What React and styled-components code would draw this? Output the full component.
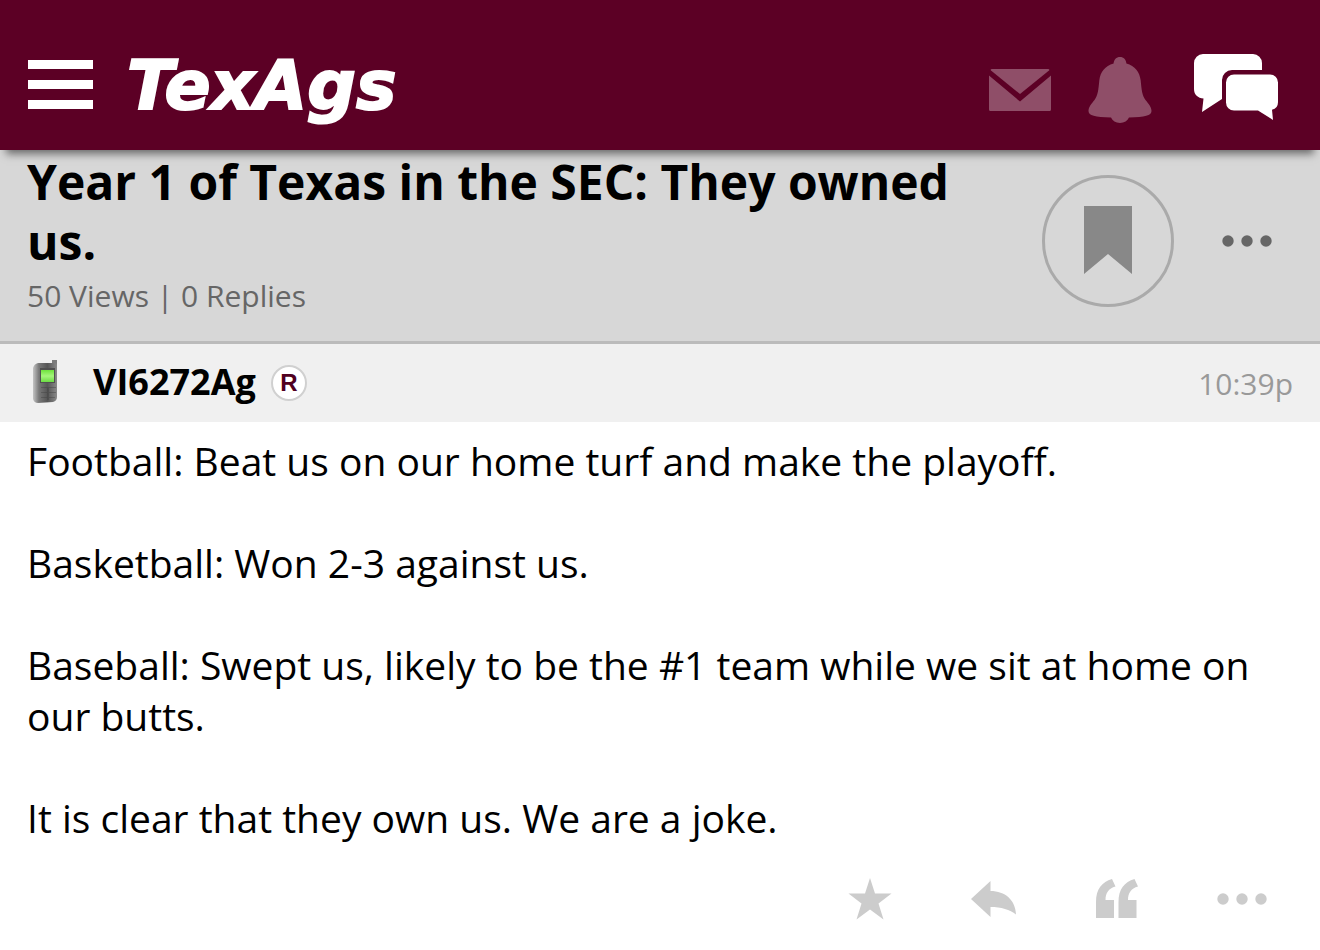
import React from 'react'
import styled, { createGlobalStyle } from 'styled-components';

const GlobalStyle = createGlobalStyle`
    *{
        box-sizing: border-box;
    }
    body{
        margin: 0;
        background: #ffffff;
        color: #000000;
        font-family: 'Open Sans', 'Noto Sans', sans-serif;
    }
`;

const EnvelopeIcon = () => (
  <svg width='64' height='44' viewBox='0 0 64 44' fill='currentColor' aria-hidden='true'>
    <path d='M4 1h56q2 0 1 1.500L32 26 3 2.500Q2 1 4 1z' />
    <path d='M1 7.500L32 33.500 63 7.500V41.500a1.500 1.500 0 0 1-1.500 1.500h-59A1.500 1.500 0 0 1 1 41.500z' />
  </svg>
)

const BellIcon = () => (
  <svg width='64' height='68' viewBox='0 0 64 68' fill='currentColor' aria-hidden='true'>
    <path d='M32 1c3.600 0 6.200 2.600 6.400 6.600 8.600 2.600 13.300 8.400 14.300 17 .8 9.200 1.600 15.400 4.800 19.400 2.900 3.600 6 7 6 11 0 4.600-6.500 6-22.500 6.600C39.500 65 36.300 67 32 67s-7.500-2-9-5.400C7 61 .5 59.600.5 55c0-4 3.100-7.400 6-11 3.200-4 4-10.200 4.800-19.400 1-8.600 5.700-14.400 14.300-17C25.800 3.600 28.400 1 32 1z' />
  </svg>
)

const ChatIcon = () => (
  <svg width='84' height='68' viewBox='0 0 84 68' fill='currentColor' aria-hidden='true'>
    <path d='M9 1h50a9 9 0 0 1 9 9v7H38a10 10 0 0 0-10 10v19L8 59l1.500-13.500C4 45 0 42 0 36V10a9 9 0 0 1 9-9z' />
    <path d='M40 21.500h36a8 8 0 0 1 8 8V49a8 8 0 0 1-6 7.800L79 67 64 57.500H40a8 8 0 0 1-8-8v-20a8 8 0 0 1 8-8z' />
  </svg>
)

const BookmarkIcon = () => (
  <svg width='48' height='68' viewBox='0 0 48 68' fill='#888888' aria-hidden='true'>
    <path d='M0 0h48v68L24 48 0 68z' />
  </svg>
)

const DotsIcon = () => (
  <svg width='50' height='12' viewBox='0 0 50 12' fill='currentColor' aria-hidden='true'>
    <circle cx='6' cy='6' r='5.700' />
    <circle cx='25' cy='6' r='5.700' />
    <circle cx='44' cy='6' r='5.700' />
  </svg>
)

const StarIcon = () => (
  <svg width='44' height='42' viewBox='0 0 44 42' fill='currentColor' aria-hidden='true'>
    <path d='M22 0l5 15.500h16.500L30.500 25.500l5 16L22 31.500l-13.500 10 5-16L.5 15.500H17z' />
  </svg>
)

const ReplyIcon = () => (
  <svg width='46' height='38' viewBox='0 0 46 38' fill='currentColor' aria-hidden='true'>
    <path d='M0 19L19.500 1v10C34 11 44.500 20 45 34.500 39 29.500 30 27 19.500 27v10z' />
  </svg>
)

const QuoteIcon = () => (
  <svg width='42' height='40' viewBox='0 0 42 40' fill='currentColor' aria-hidden='true'>
    <path d='M0 39V23C0 10 6 3 16 0l3.500 7.500C12.500 9.500 9.500 14 9.500 21H18v18z' />
    <path d='M22.500 39V23c0-13 6-20 16-23L42 7.500c-7 2-10 6.500-10 13.500h8.500v18z' />
  </svg>
)

const PhoneIcon = () => (
  <svg width='30' height='46' viewBox='0 0 30 46' role='img' aria-label='Posted from mobile'>
    <defs>
      <linearGradient id='shell' x1='0' x2='1' y1='0' y2='0'>
        <stop offset='0' stopColor='#c4c4c4' />
        <stop offset='0.25' stopColor='#787878' />
        <stop offset='0.6' stopColor='#565656' />
        <stop offset='1' stopColor='#8a8a8a' />
      </linearGradient>
      <linearGradient id='screen' x1='0' x2='0' y1='0' y2='1'>
        <stop offset='0' stopColor='#6ee23c' />
        <stop offset='0.5' stopColor='#a5f57c' />
        <stop offset='1' stopColor='#6cdc44' />
      </linearGradient>
    </defs>
    <path d='M22 1h5v6h-5z' fill='#7c7c7c' />
    <path d='M8 4h17q2 0 2 3v31q0 4-4 5l-15 1q-4 0-5-4V9q1-4 5-5z' fill='url(#shell)' />
    <path d='M10 9h15v15H10z' fill='#505050' />
    <path d='M11 11h13v12H11z' fill='url(#screen)' />
    <path d='M11 28h15v1H11zM11 33h15v1H11zM11 38h14v1H11zM17 29h2v12h-2z' fill='#3e3e3e' opacity='0.4' />
  </svg>
)

const App = () => {
  return (
    <>
      <GlobalStyle />
      <Header>
        <MenuButton aria-label='Menu'>
          <MenuBar /><MenuBar /><MenuBar />
        </MenuButton>
        <Logo href='#'>TexAgs</Logo>
        <HeaderNav>
          <IconButton $color='#8f4e68' aria-label='Messages'><EnvelopeIcon /></IconButton>
          <IconButton $color='#8f4e68' aria-label='Notifications'><BellIcon /></IconButton>
          <IconButton $color='#ffffff' aria-label='Forums'><ChatIcon /></IconButton>
        </HeaderNav>
      </Header>
      <Topic>
        <TopicInfo>
          <Title>Year 1 of Texas in the SEC: They owned us.</Title>
          <Stats>50 Views | 0 Replies</Stats>
        </TopicInfo>
        <TopicActions>
          <BookmarkButton aria-label='Bookmark'><BookmarkIcon /></BookmarkButton>
          <IconButton $color='#666666' aria-label='Topic options'><DotsIcon /></IconButton>
        </TopicActions>
      </Topic>
      <article>
        <PostHeader>
          <PhoneIcon />
          <UserName href='#'>VI6272Ag</UserName>
          <Badge>R</Badge>
          <Time>10:39p</Time>
        </PostHeader>
        <PostBody>
          <p>Football: Beat us on our home turf and make the playoff.</p>
          <p>Basketball: Won 2-3 against us.</p>
          <p>Baseball: Swept us, likely to be the #1 team while we sit at home on our butts.</p>
          <p>It is clear that they own us. We are a joke.</p>
        </PostBody>
        <PostActions>
          <IconButton $color='#cccccc' aria-label='Star'><StarIcon /></IconButton>
          <IconButton $color='#cccccc' aria-label='Reply'><ReplyIcon /></IconButton>
          <IconButton $color='#cccccc' aria-label='Quote'><QuoteIcon /></IconButton>
          <IconButton $color='#cccccc' aria-label='More'><DotsIcon /></IconButton>
        </PostActions>
      </article>
    </>
  )
}

const Header = styled.header`
    position: relative;
    display: flex;
    align-items: center;
    height: 150px;
    padding: 30px 42px 0 28px;
    background: #5c0025;
    box-shadow: 0 10px 8px -6px rgba(0, 0, 0, 0.5);
`;

const MenuButton = styled.button`
    display: flex;
    flex-direction: column;
    gap: 11px;
    width: 65px;
    margin-bottom: 12px;
    padding: 0;
    border: 0;
    background: none;
`;

const MenuBar = styled.span`
    height: 9px;
    background: #ffffff;
`;

const Logo = styled.a`
    margin: 0 0 8px 34px;
    color: #ffffff;
    font: italic bold 68px/72px 'DejaVu Sans', sans-serif;
    text-decoration: none;
    -webkit-text-stroke: 2px #ffffff;
`;

const HeaderNav = styled.nav`
    display: flex;
    align-items: center;
    gap: 36px;
    margin-left: auto;

    button:last-child{
        margin: 0 0 6px 6px;
    }
`;

const IconButton = styled.button`
    display: flex;
    padding: 0;
    border: 0;
    background: none;
    color: ${({ $color }) => $color};
`;

const Topic = styled.section`
    display: flex;
    justify-content: space-between;
    padding: 2px 48px 24px 27px;
    background: #d7d7d7;
    border-bottom: 3px solid #bbbbbb;
`;

const TopicInfo = styled.div`
    flex: 1;
    max-width: 960px;
`;

const Title = styled.h1`
    margin: 0;
    font-size: 48px;
    line-height: 60px;
`;

const Stats = styled.div`
    margin-top: 3px;
    color: #666666;
    font-size: 30px;
    line-height: 42px;
`;

const TopicActions = styled.div`
    display: flex;
    align-items: center;
    gap: 48px;
    height: 132px;
    margin-top: 23px;
`;

const BookmarkButton = styled.button`
    display: flex;
    align-items: center;
    justify-content: center;
    width: 132px;
    height: 132px;
    padding: 0 0 2px;
    border: 3px solid #aaaaaa;
    border-radius: 50%;
    background: none;
`;

const PostHeader = styled.header`
    display: flex;
    align-items: center;
    height: 78px;
    padding: 0 27px 3px 30px;
    background: #f0f0f0;
`;

const UserName = styled.a`
    margin-left: 33px;
    color: #000000;
    font-size: 36px;
    font-weight: bold;
    text-decoration: none;
`;

const Badge = styled.span`
    width: 36px;
    height: 36px;
    margin: 3px 0 0 15px;
    border: 2px solid #d0d0d0;
    border-radius: 50%;
    background: #ffffff;
    color: #500020;
    font: bold 24px/32px 'Liberation Sans', sans-serif;
    text-align: center;
`;

const Time = styled.time`
    margin: 3px 0 0 auto;
    color: #999999;
    font-size: 30px;
`;

const PostBody = styled.div`
    padding: 13px 27px 15px;
    font-size: 39px;
    line-height: 51px;

    p{
        margin: 0 0 51px;
    }
    p:last-child{
        margin: 0;
    }
`;

const PostActions = styled.footer`
    display: flex;
    align-items: center;
    justify-content: flex-end;
    gap: 79px;
    padding: 20px 53px 28px;
`;

export default App
